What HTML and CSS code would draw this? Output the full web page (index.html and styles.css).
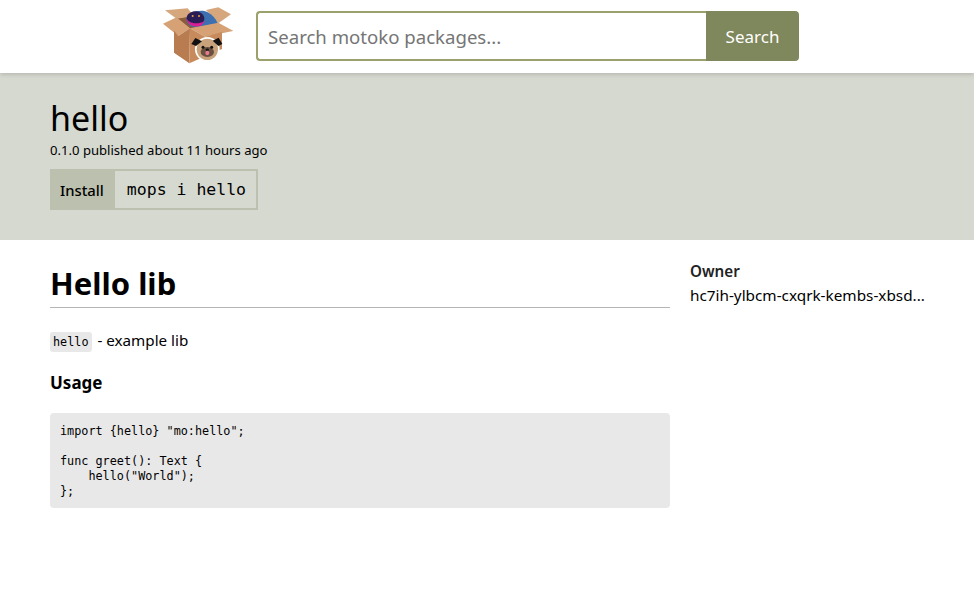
FILE: index.html
```html
<!DOCTYPE html>
<html lang="en">
<head>
<meta charset="utf-8">
<title>hello</title>
<link rel="stylesheet" href="styles.css">
</head>
<body>
<header class="topbar">
  <svg class="logo" viewBox="39 15 210 180" width="70" height="60" aria-label="mops logo">
    <path d="M80 55 L170 40 L205 70 L120 86 Z" fill="#8a5c3c"/>
    <path d="M45 31 L113 25 L132 48 L80 56 Z" fill="#d6a67c"/>
    <path d="M168 30 L205 22 L243 43 L205 70 Z" fill="#d6a67c"/>
    <path d="M110 55 C120 36 150 26 172 36 C187 44 198 56 203 70 L150 80 L125 80 C115 74 108 66 110 55 Z" fill="#3d70b0"/>
    <path d="M110 52 C113 36 136 28 152 38 C168 48 166 66 150 72 C135 78 108 72 110 52 Z" fill="#2a1c55"/>
    <path d="M110 55 C115 70 140 76 166 62 L152 78 C135 82 112 78 110 55 Z" fill="#d81f96"/>
    <circle cx="128" cy="48" r="3" fill="#e8a040"/>
    <circle cx="147" cy="48" r="3" fill="#e8a040"/>
    <path d="M39 71 L80 52 L120 85 L85 108 Z" fill="#d5a175"/>
    <path d="M120 85 L205 68 L250 93 L165 110 Z" fill="#d5a175"/>
    <path d="M72 92 L85 108 L120 85 L118 190 L72 158 Z" fill="#b87c50"/>
    <path d="M120 85 L165 110 L216 96 L216 147 L118 190 Z" fill="#c68a5c"/>
    <circle cx="172" cy="148" r="37" fill="#fff"/>
    <circle cx="172" cy="148" r="32" fill="#c7a27a"/>
    <ellipse cx="172" cy="156" rx="20" ry="15" fill="#6a5040"/>
    <path d="M124 132 L136 114 L156 124 L138 138 Z" fill="#111"/>
    <path d="M217 132 L206 113 L188 122 L205 138 Z" fill="#111"/>
    <circle cx="159" cy="142" r="4.5" fill="#111"/>
    <circle cx="185" cy="142" r="4.5" fill="#111"/>
    <ellipse cx="172" cy="149" rx="5" ry="3.5" fill="#111"/>
    <ellipse cx="172" cy="159" rx="6" ry="6.5" fill="#ea7a90"/>
  </svg>
  <form class="search">
    <input class="search-input" type="text" placeholder="Search motoko packages...">
    <button class="search-button" type="button">Search</button>
  </form>
</header>

<section class="hero">
  <h1 class="pkg-name">hello</h1>
  <p class="pkg-meta">0.1.0 published about 11 hours ago</p>
  <div class="install">
    <span class="install-label">Install</span>
    <code class="install-cmd">mops i hello</code>
  </div>
</section>

<main class="content">
  <article class="readme">
    <h1 class="readme-title">Hello lib</h1>
    <p class="readme-text"><code class="inline-code">hello</code> - example lib</p>
    <h3 class="readme-sub">Usage</h3>
    <pre class="code-block"><code>import {hello} "mo:hello";

func greet(): Text {
    hello("World");
};</code></pre>
  </article>
  <aside class="side">
    <div class="side-label">Owner</div>
    <div class="side-value">hc7ih-ylbcm-cxqrk-kembs-xbsd...</div>
  </aside>
</main>
</body>
</html>
```
FILE: styles.css
```css
* { box-sizing: border-box; }
html, body { margin: 0; padding: 0; }
body {
  font-family: "Noto Sans", "Open Sans", sans-serif;
  background: #fff;
  color: #000;
  height: 613px;
  overflow: hidden;
}
.topbar {
  height: 73px;
  display: flex;
  justify-content: center;
  align-items: center;
  gap: 23px;
  padding-right: 12px;
  background: #fff;
  box-shadow: 0 1px 5px rgba(0,0,0,.18);
  position: relative;
}
.logo { display: block; margin-top: -3px; }
.search { display: flex; width: 543px; height: 50px; margin-top: -1px; }
.search-input {
  flex: 1;
  min-width: 0;
  border: 2px solid #9ba06c;
  border-right: 0;
  border-radius: 4px 0 0 4px;
  padding: 1px 10px 0 10px;
  font: 18.6px "Noto Sans", sans-serif;
  outline: none;
}
.search-input::placeholder { color: #757575; opacity: 1; }
.search-button {
  width: 93px;
  border: 0;
  border-radius: 0 4px 4px 0;
  background: #7f875c;
  color: #fff;
  font: 17px "Noto Sans", sans-serif;
}
.hero {
  height: 167px;
  background: #d6d9d0;
  padding: 23px 50px 0;
}
.pkg-name {
  margin: 0;
  font-size: 34px;
  font-weight: 400;
  line-height: 45px;
}
.pkg-meta {
  margin: 0 0 10px;
  font-size: 13.1px;
  line-height: 18px;
}
.install {
  display: inline-flex;
  height: 41px;
  border: 2px solid #bcc0ae;
  align-items: stretch;
}
.install-label {
  display: flex;
  align-items: center;
  background: #bcc0ae;
  padding: 0 11px 0 8px;
  font-size: 14.8px;
  font-weight: 500;
}
.install-cmd {
  display: flex;
  align-items: center;
  padding: 0 10px 0 12px;
  font: 16.5px "DejaVu Sans Mono", monospace;
}
.content {
  display: flex;
  gap: 20px;
  padding: 0 50px;
}
.readme { width: 620px; padding-top: 23px; }
.readme-title {
  margin: 0 0 20px;
  font-size: 31px;
  font-weight: 700;
  line-height: 41px;
  padding-bottom: 3px;
  border-bottom: 1px solid #b5b5b5;
}
.readme-text {
  margin: 0 0 19px;
  font-size: 15.2px;
  line-height: 24px;
}
.inline-code {
  background: #e8e8e8;
  border-radius: 3px;
  padding: 3px;
  margin-right: 2px;
  font: 11.8px "DejaVu Sans Mono", monospace;
}
.readme-sub {
  margin: 0 0 18px;
  font-size: 17px;
  font-weight: 700;
  line-height: 24px;
}
.code-block {
  margin: 0;
  height: 95px;
  background: #e8e8e8;
  border-radius: 4px;
  padding: 11px 10px 0;
  font: 11.8px/15px "DejaVu Sans Mono", monospace;
}
.side { padding-top: 21px; flex: 1; min-width: 0; }
.side-label { font-size: 15.2px; font-weight: 600; color: #222; line-height: 20px; }
.side-value { font-size: 15.3px; line-height: 28px; white-space: nowrap; }
```
